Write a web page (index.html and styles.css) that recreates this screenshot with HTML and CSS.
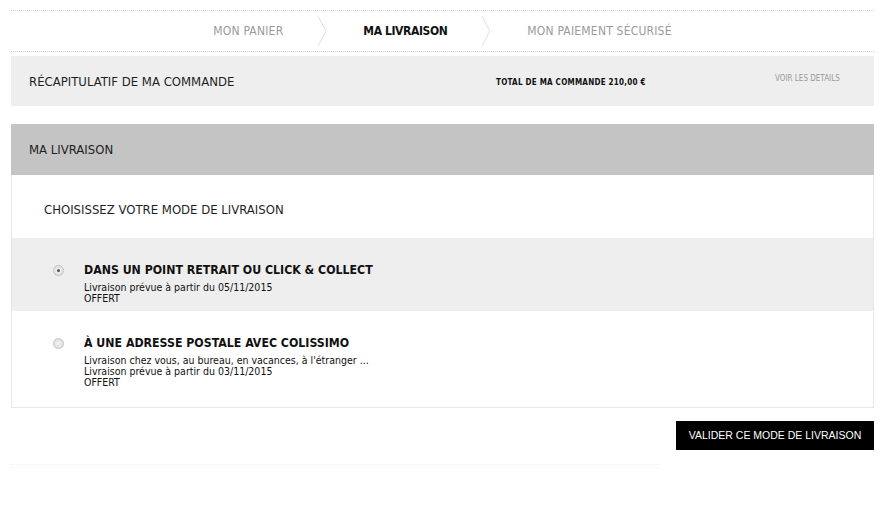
FILE: index.html
```html
<!DOCTYPE html>
<html lang="fr">

<head>
    <meta charset="UTF-8">
    <title>Ma livraison</title>
    <link rel="stylesheet" href="styles.css">
</head>

<body>
    <div id="page">
        <div class="steps">
            <span class="step">MON PANIER</span>
            <span class="sep"></span>
            <span class="step current">MA LIVRAISON</span>
            <span class="sep"></span>
            <span class="step">MON PAIEMENT SÉCURISÉ</span>
        </div>

        <div class="recap">
            <h2 class="recap-title">RÉCAPITULATIF DE MA COMMANDE</h2>
            <span class="recap-total">TOTAL DE MA COMMANDE 210,00 €</span>
            <a class="recap-link">VOIR LES DETAILS</a>
        </div>

        <div class="section-head">MA LIVRAISON</div>

        <div class="box">
            <div class="box-title">CHOISISSEZ VOTRE MODE DE LIVRAISON</div>

            <div class="option selected">
                <span class="radio on"></span>
                <div class="option-body">
                    <div class="option-title">DANS UN POINT RETRAIT OU CLICK &amp; COLLECT</div>
                    <p>Livraison prévue à partir du 05/11/2015</p>
                    <p>OFFERT</p>
                </div>
            </div>

            <div class="option">
                <span class="radio"></span>
                <div class="option-body">
                    <div class="option-title">À UNE ADRESSE POSTALE AVEC COLISSIMO</div>
                    <p>Livraison chez vous, au bureau, en vacances, à l'étranger ...</p>
                    <p>Livraison prévue à partir du 03/11/2015</p>
                    <p>OFFERT</p>
                </div>
            </div>
        </div>

        <div class="actions">
            <a class="btn">VALIDER CE MODE DE LIVRAISON</a>
        </div>

        <div class="foot"></div>
    </div>
</body>

</html>
```

FILE: styles.css
```css
* {
    margin: 0;
    padding: 0;
    border: 0;
}

body {
    background: #fff;
    font-family: "DejaVu Sans Condensed", "DejaVu Sans", sans-serif;
    color: #222;
}

#page {
    width: 863px;
    margin-left: 11px;
    padding-top: 10px;
}

.steps {
    height: 40px;
    border-top: 1px dotted #cfcfcf;
    border-bottom: 1px dotted #cfcfcf;
    display: flex;
    justify-content: center;
    align-items: center;
    font-size: 12px;
}

.step {
    color: #9a9a9a;
    letter-spacing: 0.2px;
}

.step.current {
    color: #111;
    font-weight: bold;
    letter-spacing: -0.4px;
}

.sep {
    width: 8px;
    height: 30px;
    margin: 0 37px 0 35px;
    background: linear-gradient(to top right, transparent 44%, #dedede 50%, transparent 56%) top / 8px 15px no-repeat,
        linear-gradient(to bottom right, transparent 44%, #dedede 50%, transparent 56%) bottom / 8px 15px no-repeat;
}

.recap {
    margin-top: 4px;
    height: 50px;
    background: #eee;
    display: flex;
    align-items: center;
    padding-left: 18px;
}

.recap-title {
    font-size: 13px;
    font-weight: normal;
    color: #1e1e1e;
    width: 467px;
}

.recap-total {
    font-size: 8px;
    font-weight: bold;
    letter-spacing: 0.25px;
    color: #111;
    width: 279px;
    margin-top: 2px;
}

.recap-link {
    font-size: 8px;
    color: #999;
    margin-top: -5px;
}

.section-head {
    margin-top: 18px;
    height: 51px;
    line-height: 52px;
    background: #c4c4c4;
    padding-left: 18px;
    font-size: 13px;
    color: #1e1e1e;
}

.box {
    border: 1px solid #e8e8e8;
    border-top: 0;
}

.box-title {
    height: 63px;
    line-height: 70px;
    padding-left: 32px;
    font-size: 13px;
    color: #1e1e1e;
}

.option {
    display: flex;
    padding: 25px 0 10px 41px;
    height: 73px;
    box-sizing: border-box;
}

.option + .option {
    height: 96px;
    padding-top: 25px;
}

.option.selected {
    background: #eee;
}

.radio {
    width: 11px;
    height: 11px;
    border-radius: 50%;
    background: radial-gradient(circle, #f4f4f4 0, #d8d8d8 100%);
    border: 1px solid #c4c4c4;
    box-sizing: border-box;
    margin-top: 2px;
    margin-right: 20px;
    position: relative;
}

.radio.on::after {
    content: "";
    position: absolute;
    left: 3px;
    top: 3px;
    width: 3px;
    height: 3px;
    border-radius: 50%;
    background: #555;
}

.option-title {
    font-size: 12.25px;
    font-weight: bold;
    color: #111;
    margin-bottom: 5px;
}

.option-body p {
    font-size: 10.5px;
    line-height: 11px;
    color: #111;
}

.actions {
    display: flex;
    justify-content: flex-end;
    padding-top: 13px;
}

.btn {
    width: 198px;
    height: 29px;
    line-height: 29px;
    background: #000;
    color: #fff;
    text-align: center;
    font-family: "Liberation Sans", Arial, sans-serif;
    font-size: 10.5px;
}

.foot {
    margin-top: 14px;
    width: 650px;
    height: 2px;
    border-top: 1px dotted #f0f0f0;
    border-bottom: 1px dotted #f4f4f4;
}
```
